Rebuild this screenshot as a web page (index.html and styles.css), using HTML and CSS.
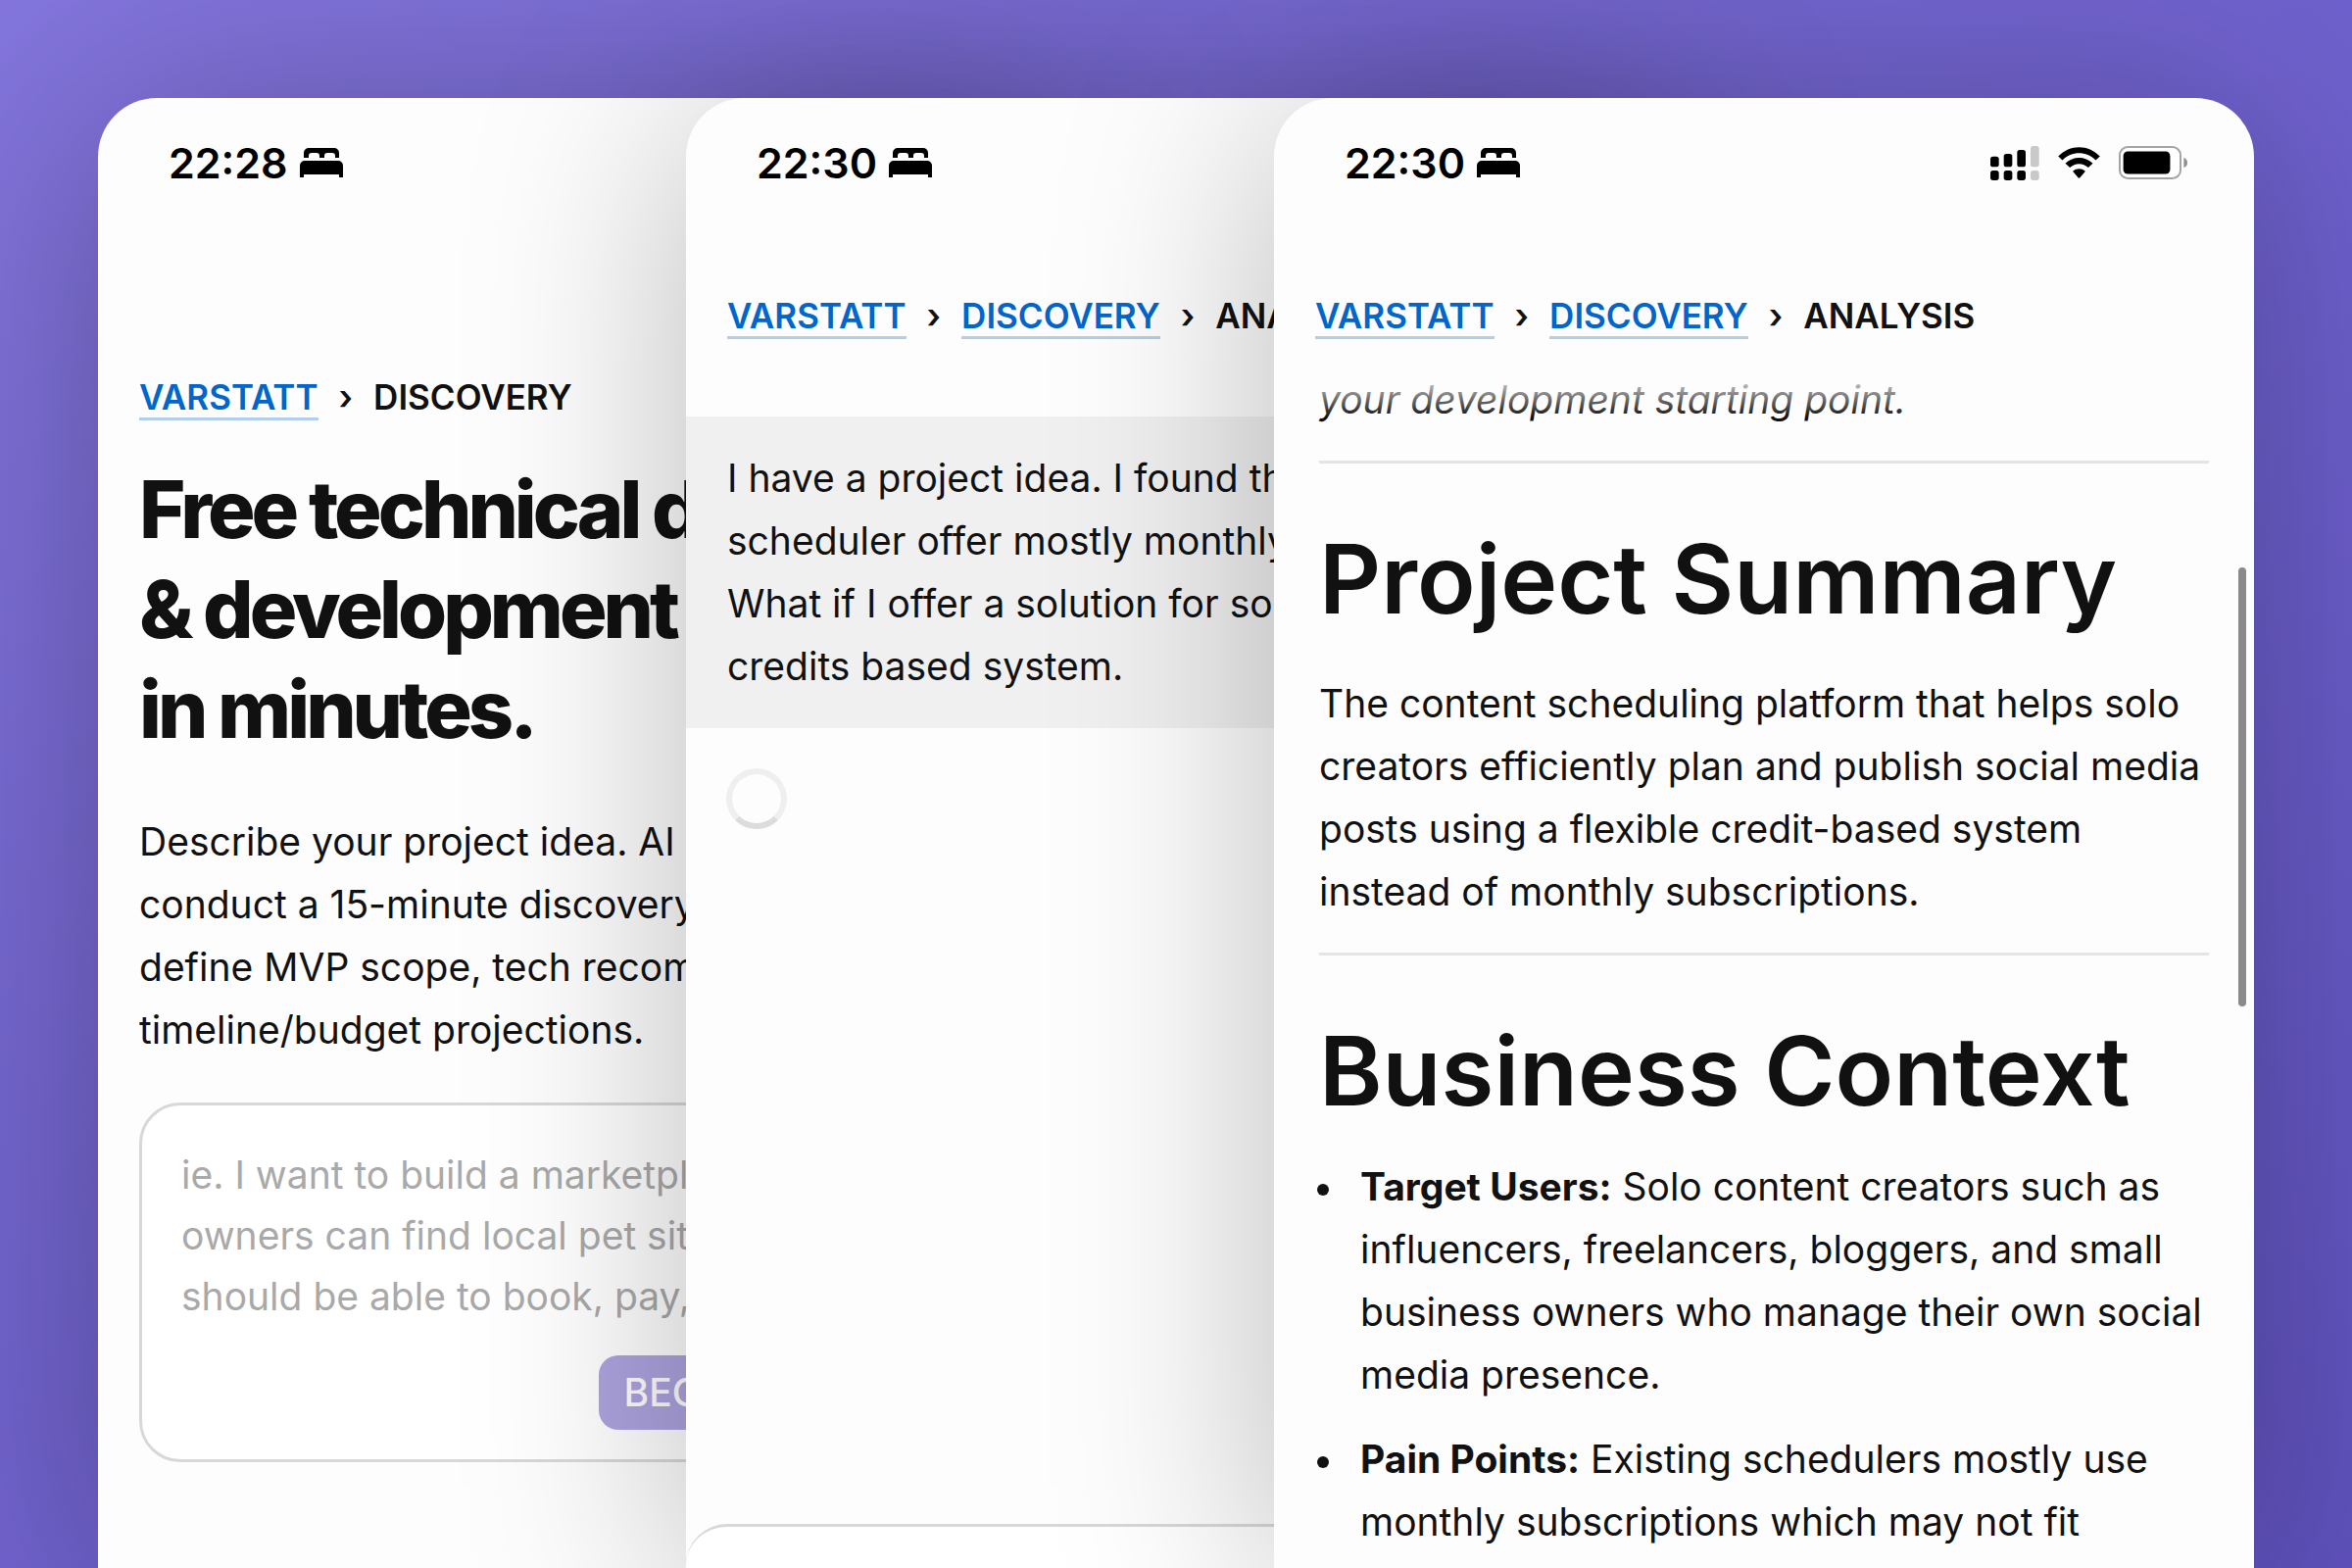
FILE: index.html
```html
<!DOCTYPE html>
<html lang="en">

<head>
    <meta charset="UTF-8">
    <meta name="viewport" content="width=device-width, initial-scale=1.0">
    <title>Varstatt Discovery</title>
    <link rel="stylesheet" href="styles.css">
</head>

<body>
    <!-- shared bed icon for the status bars -->
    <svg class="sprite" aria-hidden="true">
        <symbol id="bed" viewBox="0 0 44 30">
            <path d="M4 10V5a5 5 0 0 1 5-5h26a5 5 0 0 1 5 5v5h-4V8a3 3 0 0 0-3-3h-5a3 3 0 0 0-3 3v2h-5V8a3 3 0 0 0-3-3h-5a3 3 0 0 0-3 3v2z" />
            <path d="M0 30V18a5 5 0 0 1 5-5h34a5 5 0 0 1 5 5v12h-4v-3H4v3z" />
        </symbol>
    </svg>

    <main class="stage">
        <section class="phone phone-start">
            <div class="status">
                <span class="time">22:28</span>
                <svg class="bed"><use href="#bed" /></svg>
            </div>
            <nav class="crumbs crumbs-low">
                <a href="#">VARSTATT</a>
                <span class="sep">›</span>
                <span>DISCOVERY</span>
            </nav>
            <div class="intro">
                <h1>Free technical discovery<br>&amp; development plan<br>in minutes.</h1>
                <p>Describe your project idea. AI will<br>conduct a 15-minute discovery to<br>define MVP scope, tech recommendations,<br>timeline/budget projections.</p>
            </div>
            <form class="prompt">
                <textarea aria-label="Project idea" rows="3" placeholder="ie. I want to build a marketplace where&#10;owners can find local pet sitters. They&#10;should be able to book, pay, and review"></textarea>
                <button type="button">BEGIN DISCOVERY</button>
            </form>
        </section>

        <section class="phone phone-chat">
            <div class="status">
                <span class="time">22:30</span>
                <svg class="bed"><use href="#bed" /></svg>
            </div>
            <nav class="crumbs">
                <a href="#">VARSTATT</a>
                <span class="sep">›</span>
                <a href="#">DISCOVERY</a>
                <span class="sep">›</span>
                <span>ANALYSIS</span>
            </nav>
            <p class="message">I have a project idea. I found that social<br>scheduler offer mostly monthly plans.<br>What if I offer a solution for solo with<br>credits based system.</p>
            <div class="spinner"></div>
            <div class="sheet"></div>
        </section>

        <section class="phone phone-report">
            <div class="status">
                <span class="time">22:30</span>
                <svg class="bed"><use href="#bed" /></svg>
                <div class="indicators">
                    <svg class="signal" viewBox="0 0 150 105">
                        <g fill="#c9c9c9">
                            <rect x="123" y="0" width="26" height="64" rx="8" />
                            <rect x="123" y="75" width="26" height="30" rx="8" />
                        </g>
                        <rect x="0" y="32" width="26" height="32" rx="8" />
                        <rect x="41" y="24" width="26" height="40" rx="8" />
                        <rect x="82" y="12" width="26" height="52" rx="8" />
                        <rect x="0" y="75" width="26" height="30" rx="8" />
                        <rect x="41" y="75" width="26" height="30" rx="8" />
                        <rect x="82" y="75" width="26" height="30" rx="8" />
                    </svg>
                    <svg class="wifi" viewBox="0 0 129 97">
                        <path d="M0 29C36-9 93-9 129 29L116 41C87 12 42 12 13 41z" />
                        <path d="M22 51C46 27 83 27 107 51L93 64C77 48 52 48 36 64z" />
                        <path d="M45 75C56 65 73 65 84 75L68 94Q64 98 61 94z" />
                    </svg>
                    <svg class="battery" viewBox="0 0 211 102">
                        <rect x="3" y="3" width="187" height="96" rx="25" fill="#fff" stroke="#a3a3a3" stroke-width="6" />
                        <rect x="14" y="16" width="144" height="70" rx="14" />
                        <path d="M200 35q11 5 11 16t-11 16z" fill="#8f8f8f" />
                    </svg>
                </div>
            </div>
            <nav class="crumbs crumbs-fade">
                <a href="#">VARSTATT</a>
                <span class="sep">›</span>
                <a href="#">DISCOVERY</a>
                <span class="sep">›</span>
                <span>ANALYSIS</span>
            </nav>
            <article class="report">
                <p class="lead"><em>your development starting point.</em></p>
                <hr>
                <h2>Project Summary</h2>
                <p>The content scheduling platform that helps solo<br>creators efficiently plan and publish social media<br>posts using a flexible credit-based system<br>instead of monthly subscriptions.</p>
                <hr>
                <h2>Business Context</h2>
                <ul>
                    <li><strong>Target Users:</strong> Solo content creators such as<br>influencers, freelancers, bloggers, and small<br>business owners who manage their own social<br>media presence.</li>
                    <li><strong>Pain Points:</strong> Existing schedulers mostly use<br>monthly subscriptions which may not fit</li>
                </ul>
            </article>
            <div class="scrollbar"></div>
        </section>
    </main>
</body>

</html>
```
FILE: styles.css
```css
* {
    box-sizing: border-box;
}

body {
    margin: 0;
    background: linear-gradient(145deg, #8375dc 0%, #7466cf 35%, #6d5fcc 60%, #5f51bc 100%);
    color: #111;
    font-family: Inter, "Liberation Sans", sans-serif;
    font-size: 39px;
    line-height: 64px;
}

h1,
h2,
p,
ul {
    margin: 0;
}

.sprite {
    display: none;
}

/* three overlapping phones, each one five columns wide */
.stage {
    display: grid;
    grid-template-columns: repeat(11, 1fr);
    grid-template-rows: 100%;
    height: 100vh;
    padding: 100px 100px 0;
    overflow: hidden;
}

.phone {
    position: relative;
    display: flex;
    flex-direction: column;
    grid-row: 1;
    min-width: 0;
    overflow: hidden;
    white-space: nowrap;
    background: #fdfdfd;
    border-radius: 60px 60px 0 0;
    box-shadow: 0 20px 220px rgba(0, 0, 0, 0.27);
}

.phone-start {
    grid-column: 1 / 6;
}

.phone-chat {
    grid-column: 4 / 9;
}

.phone-report {
    grid-column: 7 / 12;
}

.status {
    display: flex;
    flex-shrink: 0;
    align-items: center;
    gap: 12px;
    height: 132px;
    padding: 0 68px 0 72px;
    color: #000;
}

.time {
    font-size: 43px;
    font-weight: 600;
}

.bed {
    width: 44px;
    height: 30px;
}

.indicators {
    display: flex;
    align-items: center;
    gap: 19px;
    margin-left: auto;
}

.signal {
    width: 50px;
    height: 35px;
}

.wifi {
    width: 43px;
    height: 32px;
}

.battery {
    width: 70px;
    height: 34px;
}

.crumbs {
    position: relative;
    display: flex;
    flex-shrink: 0;
    align-items: baseline;
    gap: 21px;
    margin-top: 69px;
    padding: 0 42px;
    font-size: 35px;
    font-weight: 600;
    line-height: 42px;
}

.crumbs-low {
    margin-top: 152px;
}

.crumbs a {
    color: #0066cc;
    text-decoration: none;
    border-bottom: 3px solid #b0cfee;
}

.crumbs-fade::after {
    content: "";
    position: absolute;
    top: 100%;
    left: 0;
    right: 0;
    height: 80px;
    background: linear-gradient(#fdfdfd 40%, rgba(253, 253, 253, 0));
}

.intro {
    padding: 0 42px;
}

.intro h1 {
    margin: 40px 0 52px;
    font-size: 81px;
    font-weight: 800;
    line-height: 102px;
    letter-spacing: -4px;
}

.prompt {
    display: flex;
    flex-direction: column;
    gap: 29px;
    margin: 42px 42px 0;
    padding: 40px 40px 30px;
    background: #fff;
    border: 3px solid #d8d8d8;
    border-radius: 42px;
}

.prompt textarea {
    width: 100%;
    padding: 0;
    overflow: hidden;
    font: inherit;
    line-height: 62px;
    white-space: pre;
    background: none;
    border: none;
    outline: none;
    resize: none;
}

.prompt textarea::placeholder {
    color: #a9a9a9;
    opacity: 1;
}

.prompt button {
    align-self: flex-end;
    height: 76px;
    padding: 0 26px;
    color: #fff;
    font: inherit;
    font-weight: 500;
    background: #aea4e0;
    border: none;
    border-radius: 20px;
}

.message {
    margin-top: 79px;
    padding: 31px 42px;
    background: #f0f0f0;
}

.spinner {
    width: 62px;
    height: 62px;
    margin: 41px;
    border: 6px solid #efefef;
    border-bottom-color: #dcdcdc;
    border-radius: 50%;
}

.sheet {
    height: 45px;
    margin-top: auto;
    background: #fff;
    border-top: 3px solid #d8d8d8;
    border-radius: 42px 42px 0 0;
}

.report {
    padding: 0 46px;
}

.report .lead {
    margin-top: 30px;
}

.report hr {
    height: 3px;
    margin: 30px 0;
    background: #e4e4e4;
    border: none;
}

.report h2 {
    margin: 58px 0 26px;
    font-size: 98px;
    font-weight: 600;
    line-height: 120px;
}

.report h2 + p {
    margin-top: 35px;
}

.report ul {
    padding-left: 42px;
    list-style: none;
}

.report li {
    margin-bottom: 22px;
}

.report li::before {
    content: "";
    display: inline-block;
    width: 12px;
    height: 12px;
    margin: 0 32px 0 -44px;
    vertical-align: middle;
    background: #111;
    border-radius: 50%;
}

.scrollbar {
    position: absolute;
    top: 479px;
    right: 8px;
    width: 8px;
    height: 448px;
    background: #8a8a8a;
    border-radius: 4px;
}
```
